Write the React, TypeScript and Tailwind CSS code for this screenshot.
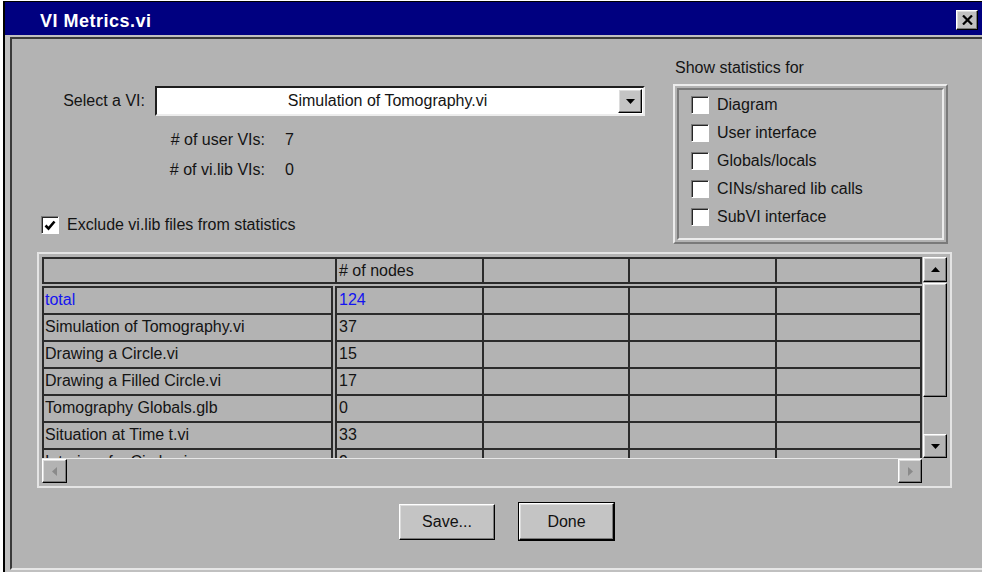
import { ReactNode } from "react";

const raised =
  "border border-t-white border-l-white border-r-black border-b-black shadow-[inset_-1px_-1px_0_#7a7a7a,inset_1px_1px_0_#dcdcdc]";
const sunken =
  "border border-t-[#7a7a7a] border-l-[#7a7a7a] border-r-white border-b-white shadow-[inset_1px_1px_0_#262626]";

const rows = [
  { name: "total", nodes: "124", blue: true },
  { name: "Simulation of Tomography.vi", nodes: "37" },
  { name: "Drawing a Circle.vi", nodes: "15" },
  { name: "Drawing a Filled Circle.vi", nodes: "17" },
  { name: "Tomography Globals.glb", nodes: "0" },
  { name: "Situation at Time t.vi", nodes: "33" },
  { name: "Interior of a Circle.vi", nodes: "9" },
];

const stats = [
  "Diagram",
  "User interface",
  "Globals/locals",
  "CINs/shared lib calls",
  "SubVI interface",
];

const Tri = ({ dir, muted }: { dir: "up" | "down" | "left" | "right"; muted?: boolean }) => {
  const pts = {
    up: "0,5 9,5 4.5,0",
    down: "0,0 9,0 4.5,5",
    left: "5,0 5,9 0,4.5",
    right: "0,0 0,9 5,4.5",
  }[dir];
  const horiz = dir === "left" || dir === "right";
  return (
    <svg width={horiz ? 5 : 9} height={horiz ? 9 : 5} viewBox={horiz ? "0 0 5 9" : "0 0 9 5"}>
      <polygon points={pts} fill={muted ? "#8a8a8a" : "#000"} />
    </svg>
  );
};

const CheckBox = ({ checked }: { checked?: boolean }) => (
  <div
    className={`flex h-[18px] w-[18px] shrink-0 items-center justify-center bg-white ${sunken}`}
  >
    {checked && (
      <svg width="12" height="11" viewBox="0 0 12 11">
        <path d="M1.5 5.5 L4.5 8.5 L10.5 1.5" fill="none" stroke="#000" strokeWidth="2.6" />
      </svg>
    )}
  </div>
);

const Cell = ({ children, className = "" }: { children?: ReactNode; className?: string }) => (
  <div className={`h-full truncate border-l-2 border-[#2b2b2b] pl-[2px] ${className}`}>
    {children}
  </div>
);

const PushButton = ({ label, isDefault }: { label: string; isDefault?: boolean }) => (
  <div className={isDefault ? "border border-black" : ""}>
    <div
      className={`flex items-center justify-center bg-[#c4c4c4] text-[16px] text-[#111] ${raised} ${
        isDefault ? "h-[37px] w-[95px]" : "h-[36px] w-[96px]"
      }`}
    >
      {label}
    </div>
  </div>
);

export default function App() {
  return (
    <div className="h-[572px] w-[982px] overflow-hidden bg-white font-['Liberation_Sans',Arial,sans-serif] text-[16px] text-[#141414]">
      <div className="ml-[3px] mt-px flex h-[571px] w-[979px] flex-col border-l-2 border-t border-black bg-[#c0c0c0]">
        {/* title bar */}
        <div className="flex h-[33px] shrink-0 items-center justify-between bg-[#000080] pl-[35px] pr-[4px]">
          <span className="pt-[5px] text-[18px] font-bold tracking-[0.5px] text-white">
            VI Metrics.vi
          </span>
          <div className={`mt-[2px] flex h-[20px] w-[22px] items-center justify-center bg-[#c0c0c0] ${raised}`}>
            <svg width="11" height="10" viewBox="0 0 11 10">
              <path d="M1 0.5 L10 9.5 M10 0.5 L1 9.5" stroke="#000" strokeWidth="2.2" />
            </svg>
          </div>
        </div>

        {/* dialog body */}
        <div className="flex-1 pb-[2px] pl-[5px] pt-[2px]">
          <div className="h-full border-b-2 border-l-2 border-t-2 border-b-[#e6e6e6] border-l-[#3a3a3a] border-t-[#3a3a3a] bg-[#b3b3b3]">
            <div className="flex">
              <div className="w-[661px] pt-[47px]">
                <div className="flex h-[30px] items-center">
                  <div className="w-[143px] pr-[10px] text-right">Select a VI:</div>
                  <div className="flex h-[30px] w-[490px] items-center border-2 border-b-[#ececec] border-l-[#1e1e1e] border-r-[#ececec] border-t-[#1e1e1e] bg-white">
                    <div className="flex-1 text-center">Simulation of Tomography.vi</div>
                    <div className={`mr-px flex h-[24px] w-[24px] items-center justify-center bg-[#c4c4c4] ${raised}`}>
                      <Tri dir="down" />
                    </div>
                  </div>
                </div>
                <div className="mt-[9px] flex h-[30px] items-center">
                  <div className="w-[253px] text-right"># of user VIs:</div>
                  <div className="ml-[20px]">7</div>
                </div>
                <div className="flex h-[30px] items-center">
                  <div className="w-[253px] text-right"># of vi.lib VIs:</div>
                  <div className="ml-[20px]">0</div>
                </div>
                <div className="mt-[30px] flex h-[20px] items-center pl-[29px]">
                  <CheckBox checked />
                  <span className="ml-[8px]">Exclude vi.lib files from statistics</span>
                </div>
              </div>

              <div className="w-[275px]">
                <div className="mt-[19px] pl-[2px] leading-[20px]">Show statistics for</div>
                <div className="mt-[6px] h-[160px] border-2 border-b-[#7a7a7a] border-l-[#ececec] border-r-[#7a7a7a] border-t-[#ececec] p-[2px]">
                  <div className="h-full border-2 border-b-[#ececec] border-l-[#7a7a7a] border-r-[#ececec] border-t-[#7a7a7a] pl-[12px] pt-px">
                    {stats.map((s) => (
                      <div key={s} className="flex h-[28px] items-center">
                        <CheckBox />
                        <span className="ml-[8px]">{s}</span>
                      </div>
                    ))}
                  </div>
                </div>
              </div>
            </div>

            {/* metrics table */}
            <div className="ml-[25px] mt-[8px] h-[236px] w-[915px] border-2 border-[#e4e4e4] p-[3px]">
              <div className="flex">
                <div className="w-[880px]">
                  <div className="h-[201px] overflow-hidden">
                    <div className="flex h-[27px] border-2 border-[#2b2b2b] leading-[23px]">
                      <div className="w-[291px]" />
                      <Cell className="w-[147px]"># of nodes</Cell>
                      <Cell className="w-[146px]" />
                      <Cell className="w-[147px]" />
                      <Cell className="w-[145px]" />
                    </div>
                    <div className="mt-[2px] flex">
                      <div className="w-[291px] border-x-2 border-[#2b2b2b]">
                        {rows.map((r) => (
                          <div
                            key={r.name}
                            className={`h-[27px] truncate border-t-2 border-[#2b2b2b] pl-[1px] leading-[24px] ${
                              r.blue ? "text-[#1414f0]" : ""
                            }`}
                          >
                            {r.name}
                          </div>
                        ))}
                      </div>
                      <div className="w-[2px]" />
                      <div className="w-[587px] border-r-2 border-[#2b2b2b]">
                        {rows.map((r) => (
                          <div
                            key={r.name}
                            className="flex h-[27px] border-t-2 border-[#2b2b2b] leading-[24px]"
                          >
                            <Cell className={`w-[147px] ${r.blue ? "text-[#1414f0]" : ""}`}>
                              {r.nodes}
                            </Cell>
                            <Cell className="w-[146px]" />
                            <Cell className="w-[147px]" />
                            <Cell className="w-[145px]" />
                          </div>
                        ))}
                      </div>
                    </div>
                  </div>

                  {/* horizontal scrollbar */}
                  <div className="flex h-[25px] border-t border-[#e6e6e6]">
                    <div className={`flex w-[25px] items-center justify-center bg-[#b3b3b3] ${raised}`}>
                      <Tri dir="left" muted />
                    </div>
                    <div className="flex-1 bg-[#b3b3b3]" />
                    <div className={`flex w-[24px] items-center justify-center bg-[#b3b3b3] ${raised}`}>
                      <Tri dir="right" muted />
                    </div>
                  </div>
                </div>

                {/* vertical scrollbar */}
                <div className="flex h-[201px] w-[25px] flex-col pl-px">
                  <div className={`flex h-[25px] items-center justify-center bg-[#b3b3b3] ${raised}`}>
                    <Tri dir="up" />
                  </div>
                  <div className={`mt-px h-[114px] bg-[#b3b3b3] ${raised}`} />
                  <div className="flex-1 border-l border-[#e6e6e6]" />
                  <div className={`flex h-[24px] items-center justify-center bg-[#b3b3b3] ${raised}`}>
                    <Tri dir="down" />
                  </div>
                </div>
              </div>
            </div>

            <div className="mt-[14px] flex h-[39px] items-center pl-[387px]">
              <PushButton label="Save..." />
              <div className="w-[23px]" />
              <PushButton label="Done" isDefault />
            </div>
          </div>
        </div>
      </div>
    </div>
  );
}
